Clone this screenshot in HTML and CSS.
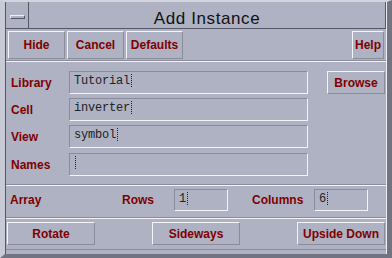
FILE: index.html
```html
<!DOCTYPE html>
<html lang="en">
<head>
    <meta charset="UTF-8">
    <title>Add Instance</title>
    <link rel="stylesheet" href="styles.css">
</head>
<body>

    <div class="window">
        <div class="inner">
            <div class="titlebar">
                <div class="menu-box"><span class="menu-bar"></span></div>
                <div class="title">Add Instance</div>
            </div>

            <div class="panel">
                <div class="toolbar">
                    <button class="btn tool">Hide</button>
                    <button class="btn tool">Cancel</button>
                    <button class="btn tool">Defaults</button>
                    <span class="spacer"></span>
                    <button class="btn help">Help</button>
                </div>
                <div class="sep"></div>

                <div class="form">
                    <span class="label">Library</span>
                    <div class="field">Tutorial<i class="caret"></i></div>
                    <button class="btn browse">Browse</button>

                    <span class="label">Cell</span>
                    <div class="field">inverter<i class="caret"></i></div>
                    <span></span>

                    <span class="label">View</span>
                    <div class="field">symbol<i class="caret"></i></div>
                    <span></span>

                    <span class="label names">Names</span>
                    <div class="field names"><i class="caret"></i></div>
                    <span></span>
                </div>
                <div class="sep"></div>

                <div class="array-row">
                    <span class="label">Array</span>
                    <span class="label">Rows</span>
                    <div class="field small">1<i class="caret"></i></div>
                    <span></span>
                    <span class="label">Columns</span>
                    <div class="field small">6<i class="caret"></i></div>
                </div>
                <div class="sep"></div>

                <div class="actions">
                    <button class="btn wide">Rotate</button>
                    <button class="btn wide">Sideways</button>
                    <button class="btn wide">Upside Down</button>
                </div>
            </div>
        </div>
    </div>

</body>
</html>
```

FILE: styles.css
```css
body { margin: 0; background: #aeb2c3; font-family: "Liberation Sans", Arial, sans-serif; }

.window { width: 392px; height: 258px; box-sizing: border-box; background: #aeb2c3;
    border-style: solid; border-width: 2px 5px 4px 5px;
    border-color: #d2d4de #727484 #727484 #c8cad6; }
.inner { height: 100%; box-sizing: border-box; display: flex; flex-direction: column;
    border-left: 1px solid #555766; border-right: 1px solid #eceef4; }

.titlebar { height: 27px; box-sizing: border-box; display: flex;
    border-bottom: 1px solid #555766; border-right: 1px solid #555766; }
.menu-box { width: 23px; box-sizing: border-box; border-right: 1px solid #555766; padding: 13px 0 0 4px; }
.menu-bar { display: block; width: 15px; height: 4px; box-sizing: border-box;
    border: 1px solid; border-color: #eceef4 #555766 #555766 #eceef4; }
.title { flex: 1; text-align: center; font-size: 17px; color: #111; letter-spacing: 0.6px; padding-top: 7px; }

.panel { flex: 1; display: flex; flex-direction: column; border-bottom: 1px solid #8a8c9a; margin-bottom: 4px; }

.btn { font-family: "Liberation Sans", Arial, sans-serif; font-weight: bold; font-size: 12px; color: #800000;
    background: #aeb2c3; padding: 0; box-sizing: border-box;
    border: 1px solid; border-color: #f4f4f8 #8a8c9a #8a8c9a #f4f4f8; }

.toolbar { display: flex; gap: 2px; padding: 2px 2px 0 2px; }
.tool { width: 57px; height: 28px; }
.help { width: 32px; height: 28px; }
.spacer { flex: 1; }

.sep { border-top: 1px solid #8a8c9a; border-bottom: 1px solid #f4f4f8; margin-top: 1px; }

.label { font-weight: bold; font-size: 12px; color: #800000; }

.form { display: grid; grid-template-columns: 58px 239px 77px; row-gap: 4px;
    grid-auto-rows: 23px; align-items: center; padding: 9px 0 8px 5px; }
.form .names { margin-top: 2px; }
.browse { width: 58px; height: 23px; justify-self: end; }

.field { height: 23px; box-sizing: border-box; display: flex; align-items: flex-start;
    padding: 2px 0 0 4px; border: 1px solid; border-color: #8a8c9a #f4f4f8 #f4f4f8 #8a8c9a;
    font-family: "Liberation Mono", "Courier New", monospace; font-size: 12px; letter-spacing: -0.2px; color: #222; }
.caret { display: inline-block; width: 1px; height: 13px; margin-left: 1px; margin-top: 0;
    border-left: 1px dotted #222; }

.array-row { display: grid; grid-template-columns: 112px 52px 54px 24px 62px 54px;
    align-items: center; padding: 3px 0 5px 4px; }
.field.small { height: 22px; }

.actions { display: flex; justify-content: space-between; padding: 3px 1px 0 1px; }
.wide { width: 88px; height: 23px; }
```
